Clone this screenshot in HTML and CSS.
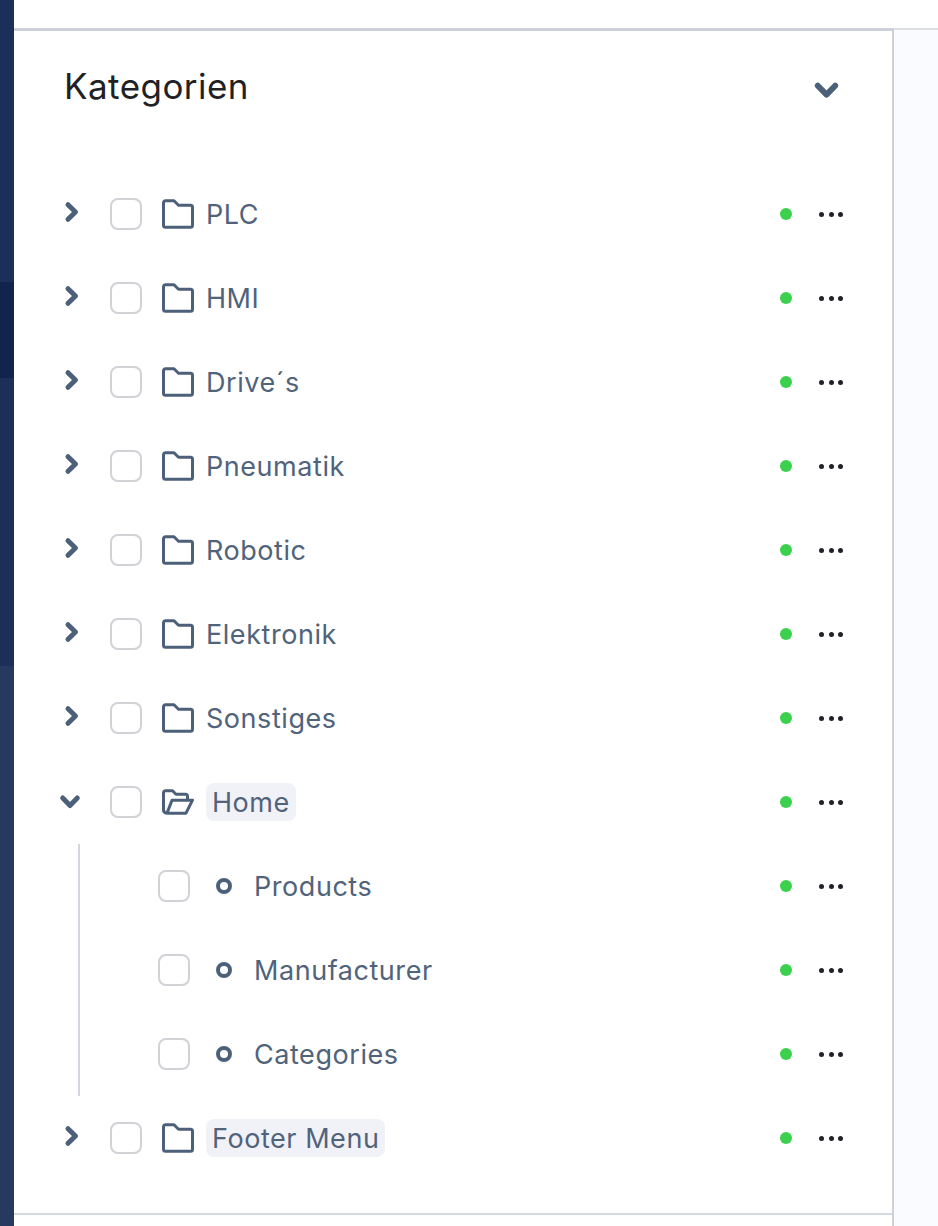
FILE: index.html
```html
<!DOCTYPE html>
<html lang="de">
  <head>
    <meta charset="UTF-8" />
    <meta name="viewport" content="width=device-width, initial-scale=1.0" />
    <title>Kategorien</title>
    <link rel="stylesheet" href="styles.css">
  </head>
  <body>
    <svg class="sprite" aria-hidden="true">
      <symbol id="chevron" viewBox="0 0 16 24"><path d="M4 4.700L11.500 12 4 19.300" fill="none" stroke="currentColor" stroke-width="5" stroke-linecap="round" stroke-linejoin="round"/></symbol>
      <symbol id="folder" viewBox="0 0 32 32"><path d="M1.500 4.800a2 2 0 0 1 2-2H12l4.500 4.500h12a2 2 0 0 1 2 2v18a2 2 0 0 1-2 2h-25a2 2 0 0 1-2-2z" fill="none" stroke="currentColor" stroke-width="3" stroke-linejoin="round"/></symbol>
      <symbol id="folder-open" viewBox="0 0 32 32"><path d="M5 27.200C2.500 27 1.500 25.500 1.500 24V6.800a2 2 0 0 1 2-2h7L14 8.300h9.500a2 2 0 0 1 2 2V14M5 27.200h19l6.500-13H10z" fill="none" stroke="currentColor" stroke-width="3" stroke-linejoin="round"/></symbol>
    </svg>

    <div class="sidebar">
      <div class="band band-top"></div>
      <div class="band band-dark"></div>
      <div class="band band-mid"></div>
      <div class="band band-light"></div>
    </div>

    <div class="main">
      <div class="top-space"></div>
      <div class="content">
        <section class="card">
          <!-- Card header -->
          <div class="card-header">
            <h1>Kategorien</h1>
            <svg class="collapse-icon"><use href="#chevron"/></svg>
          </div>

          <!-- Category tree -->
          <ul class="tree">
            <li class="row">
              <svg class="toggle"><use href="#chevron"/></svg>
              <span class="check"></span>
              <svg class="folder"><use href="#folder"/></svg>
              <span class="label">PLC</span>
              <span class="status"></span>
              <span class="more"><i></i><i></i><i></i></span>
            </li>
            <li class="row">
              <svg class="toggle"><use href="#chevron"/></svg>
              <span class="check"></span>
              <svg class="folder"><use href="#folder"/></svg>
              <span class="label">HMI</span>
              <span class="status"></span>
              <span class="more"><i></i><i></i><i></i></span>
            </li>
            <li class="row">
              <svg class="toggle"><use href="#chevron"/></svg>
              <span class="check"></span>
              <svg class="folder"><use href="#folder"/></svg>
              <span class="label">Drive´s</span>
              <span class="status"></span>
              <span class="more"><i></i><i></i><i></i></span>
            </li>
            <li class="row">
              <svg class="toggle"><use href="#chevron"/></svg>
              <span class="check"></span>
              <svg class="folder"><use href="#folder"/></svg>
              <span class="label">Pneumatik</span>
              <span class="status"></span>
              <span class="more"><i></i><i></i><i></i></span>
            </li>
            <li class="row">
              <svg class="toggle"><use href="#chevron"/></svg>
              <span class="check"></span>
              <svg class="folder"><use href="#folder"/></svg>
              <span class="label">Robotic</span>
              <span class="status"></span>
              <span class="more"><i></i><i></i><i></i></span>
            </li>
            <li class="row">
              <svg class="toggle"><use href="#chevron"/></svg>
              <span class="check"></span>
              <svg class="folder"><use href="#folder"/></svg>
              <span class="label">Elektronik</span>
              <span class="status"></span>
              <span class="more"><i></i><i></i><i></i></span>
            </li>
            <li class="row">
              <svg class="toggle"><use href="#chevron"/></svg>
              <span class="check"></span>
              <svg class="folder"><use href="#folder"/></svg>
              <span class="label">Sonstiges</span>
              <span class="status"></span>
              <span class="more"><i></i><i></i><i></i></span>
            </li>
            <li class="row">
              <svg class="toggle open"><use href="#chevron"/></svg>
              <span class="check"></span>
              <svg class="folder"><use href="#folder-open"/></svg>
              <span class="label tagged">Home</span>
              <span class="status"></span>
              <span class="more"><i></i><i></i><i></i></span>
            </li>
            <li>
              <ul class="children">
                <li class="row child">
                  <span class="check"></span>
                  <span class="ring"></span>
                  <span class="label">Products</span>
                  <span class="status"></span>
                  <span class="more"><i></i><i></i><i></i></span>
                </li>
                <li class="row child">
                  <span class="check"></span>
                  <span class="ring"></span>
                  <span class="label">Manufacturer</span>
                  <span class="status"></span>
                  <span class="more"><i></i><i></i><i></i></span>
                </li>
                <li class="row child">
                  <span class="check"></span>
                  <span class="ring"></span>
                  <span class="label">Categories</span>
                  <span class="status"></span>
                  <span class="more"><i></i><i></i><i></i></span>
                </li>
              </ul>
            </li>
            <li class="row">
              <svg class="toggle"><use href="#chevron"/></svg>
              <span class="check"></span>
              <svg class="folder"><use href="#folder"/></svg>
              <span class="label tagged">Footer Menu</span>
              <span class="status"></span>
              <span class="more"><i></i><i></i><i></i></span>
            </li>
          </ul>
          <div class="card-footer"></div>
        </section>
        <div class="aside"></div>
      </div>
    </div>
  </body>
</html>
```

FILE: styles.css
```css
* {
  box-sizing: border-box;
  margin: 0;
  padding: 0;
}

html,
body {
  height: 1226px;
  overflow: hidden;
}

body {
  display: flex;
  font-family: Inter, "Noto Sans", sans-serif;
  background: #fff;
  color: #51637a;
}

.sprite {
  display: none;
}

/* Sidebar strip */
.sidebar {
  width: 14px;
  flex-shrink: 0;
  display: flex;
  flex-direction: column;
}

.band-top {
  height: 282px;
  background: #1a2f5a;
}

.band-dark {
  height: 96px;
  background: #10244e;
}

.band-mid {
  height: 288px;
  background: #1b2f58;
}

.band-light {
  flex: 1;
  background: #26395e;
}

.main {
  flex: 1;
  display: flex;
  flex-direction: column;
}

.top-space {
  height: 28px;
}

.content {
  flex: 1;
  display: flex;
}

/* Card */
.card {
  width: 880px;
  border-top: 3px solid #cdd0d8;
  border-right: 2px solid #cdd0d8;
}

.aside {
  flex: 1;
  background: #fafbfe;
  border-top: 2px solid #dcdee4;
}

.card-header {
  height: 141px;
  padding: 0 56.500px 0 50px;
  display: flex;
  justify-content: space-between;
  align-items: flex-start;
}

h1 {
  font-size: 35px;
  font-weight: 400;
  letter-spacing: 0.450px;
  line-height: 40px;
  margin-top: 35px;
  color: #1f2125;
}

.collapse-icon {
  width: 19px;
  height: 29px;
  margin-top: 44.500px;
  color: #4d6079;
  transform: rotate(90deg);
}

.tree {
  list-style: none;
}

.row {
  height: 84px;
  display: flex;
  align-items: center;
  padding-left: 50px;
  font-size: 27px;
  letter-spacing: 0.550px;
}

.toggle {
  width: 16px;
  height: 24px;
  color: #4d6079;
  margin-top: -4px;
}

.toggle.open {
  transform: translateX(-2px) rotate(90deg);
  margin-top: 0;
}

.check {
  width: 32px;
  height: 32px;
  flex-shrink: 0;
  margin-left: 30px;
  border: 2px solid #d0d2d6;
  border-radius: 8px;
  background: #fff;
}

.folder {
  width: 32px;
  height: 32px;
  margin-left: 20px;
  color: #4d6079;
}

.label {
  height: 38px;
  margin-left: 12px;
  line-height: 40px;
  flex: none;
}

.tagged {
  padding: 0 6px;
  border-radius: 8px;
  background: #f1f2f7;
}

.status {
  width: 12px;
  height: 12px;
  margin-left: auto;
  border-radius: 50%;
  background: #3bd14d;
}

.more {
  display: flex;
  gap: 4.400px;
  margin-left: 27px;
  margin-right: 49px;
}

.more i {
  width: 5px;
  height: 5px;
  border-radius: 50%;
  background: #202227;
}

/* Nested rows */
.children {
  list-style: none;
  margin-left: 64px;
  border-left: 2px solid #d3d6dc;
}

.child {
  padding-left: 46px;
}

.child .check {
  margin-left: 32px;
}

.ring {
  width: 16px;
  height: 16px;
  margin-left: 26px;
  border: 4.500px solid #4d6079;
  border-radius: 50%;
}

.child .label {
  margin-left: 22px;
}

.card-footer {
  margin-top: 33px;
  border-top: 2px solid #d5dadf;
}
```
